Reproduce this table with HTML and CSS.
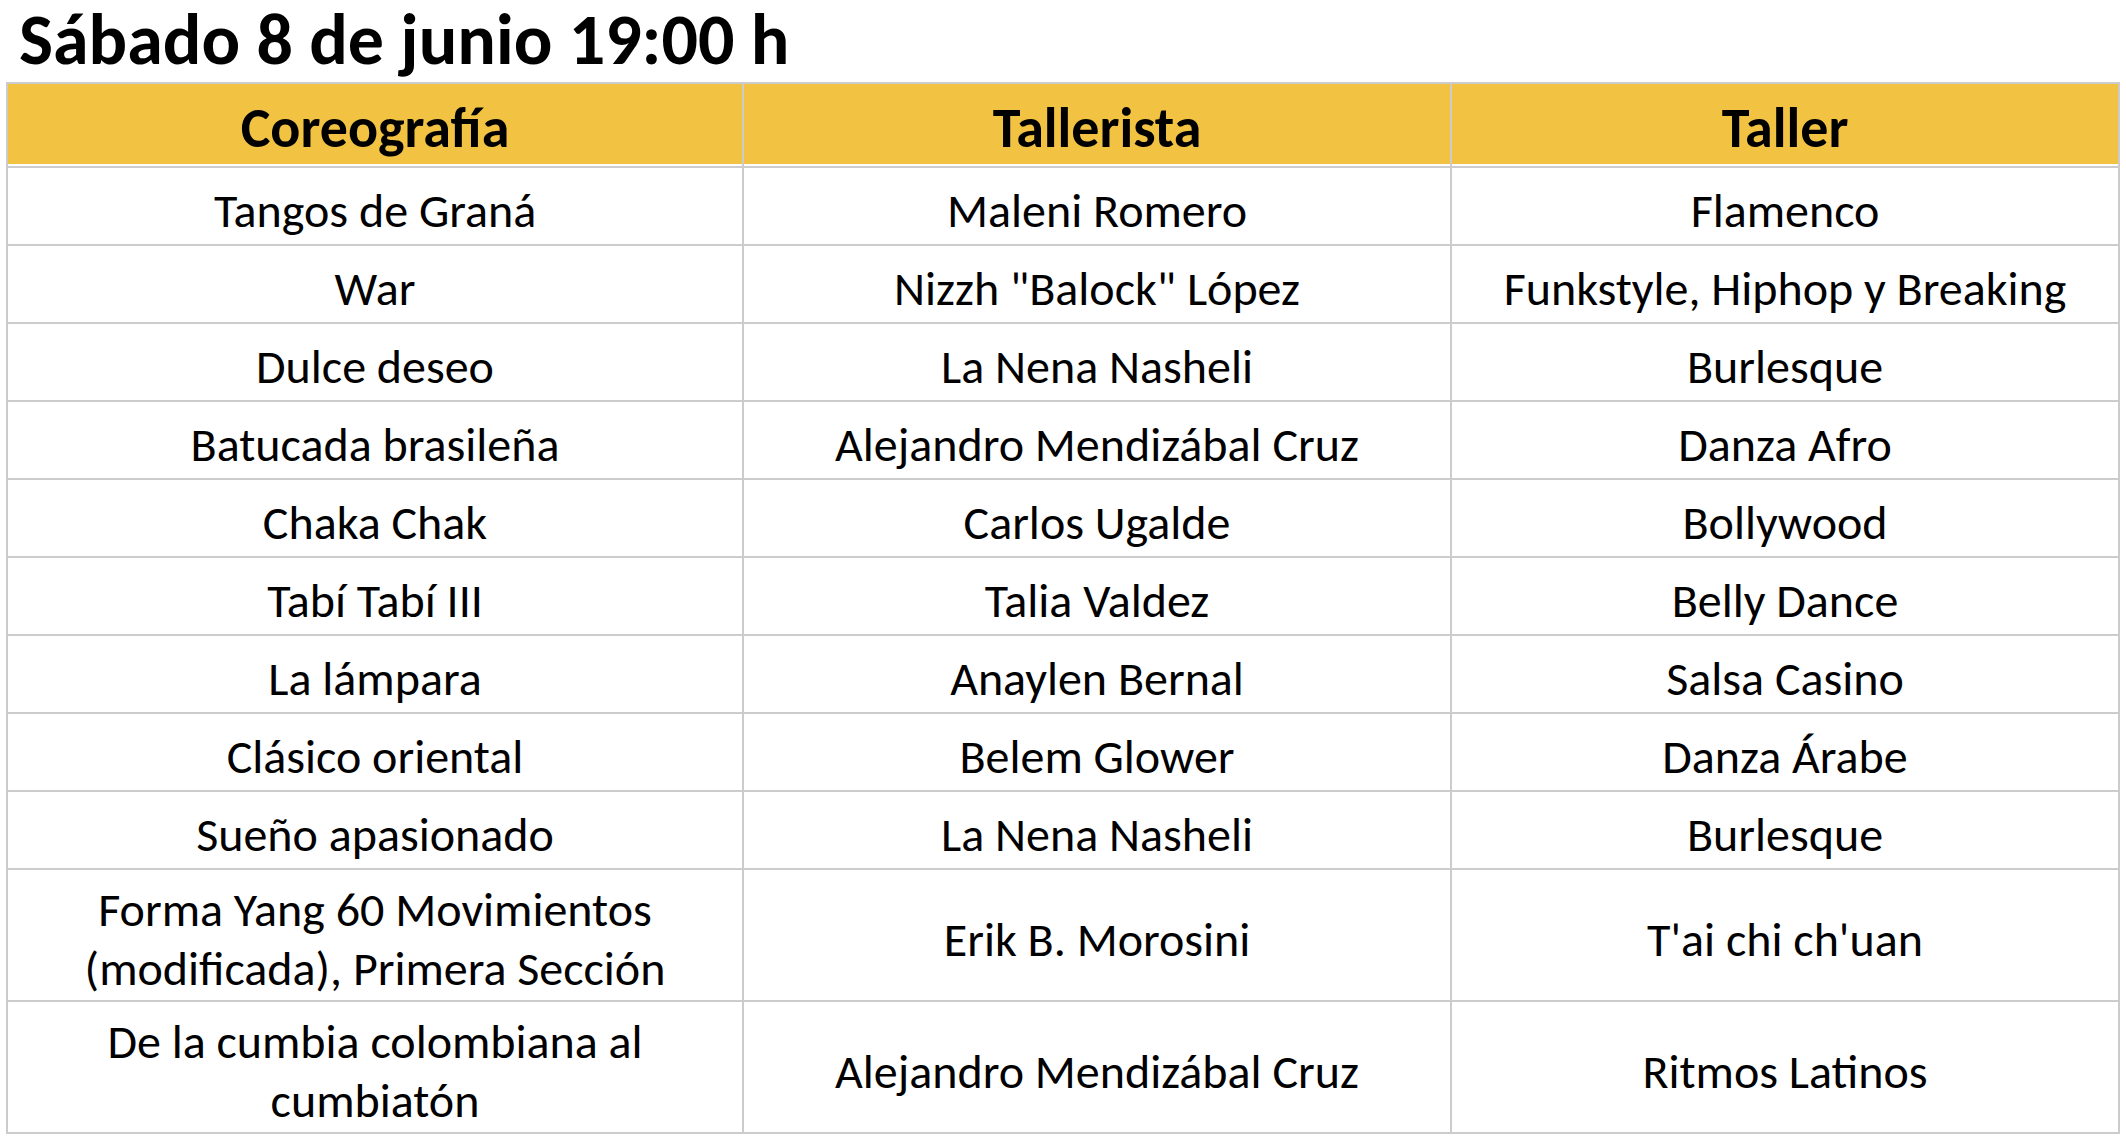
FILE: index.html
```html
<!DOCTYPE html>
<html lang="es">
<head>
<meta charset="utf-8">
<title>Sábado 8 de junio 19:00 h</title>
<link rel="stylesheet" href="styles.css">
</head>
<body>
<div class="page">
  <h1 class="title">Sábado 8 de junio 19:00 h</h1>
  <div class="grid">
    <div class="cell head">Coreografía</div>
    <div class="cell head">Tallerista</div>
    <div class="cell head">Taller</div>

    <div class="cell">Tangos de Graná</div>
    <div class="cell">Maleni Romero</div>
    <div class="cell">Flamenco</div>

    <div class="cell">War</div>
    <div class="cell">Nizzh "Balock" López</div>
    <div class="cell">Funkstyle, Hiphop y Breaking</div>

    <div class="cell">Dulce deseo</div>
    <div class="cell">La Nena Nasheli</div>
    <div class="cell">Burlesque</div>

    <div class="cell">Batucada brasileña</div>
    <div class="cell">Alejandro Mendizábal Cruz</div>
    <div class="cell">Danza Afro</div>

    <div class="cell">Chaka Chak</div>
    <div class="cell">Carlos Ugalde</div>
    <div class="cell">Bollywood</div>

    <div class="cell">Tabí Tabí III</div>
    <div class="cell">Talia Valdez</div>
    <div class="cell">Belly Dance</div>

    <div class="cell">La lámpara</div>
    <div class="cell">Anaylen Bernal</div>
    <div class="cell">Salsa Casino</div>

    <div class="cell">Clásico oriental</div>
    <div class="cell">Belem Glower</div>
    <div class="cell">Danza Árabe</div>

    <div class="cell">Sueño apasionado</div>
    <div class="cell">La Nena Nasheli</div>
    <div class="cell">Burlesque</div>

    <div class="cell">Forma Yang 60 Movimientos<br>(modificada), Primera Sección</div>
    <div class="cell">Erik B. Morosini</div>
    <div class="cell">T'ai chi ch'uan</div>

    <div class="cell">De la cumbia colombiana al<br>cumbiatón</div>
    <div class="cell">Alejandro Mendizábal Cruz</div>
    <div class="cell">Ritmos Latinos</div>
  </div>
</div>
</body>
</html>
```

FILE: styles.css
```css
html, body {
  margin: 0;
  padding: 0;
  background: #ffffff;
}

body {
  font-family: "Carlito", "Calibri", "Lato", "Liberation Sans", sans-serif;
  color: #000000;
}

.page {
  padding: 0 0 0 6px;
}

.title {
  margin: 0 0 4px 13px;
  font-size: 72px;
  font-weight: 700;
  line-height: 78px;
}

.grid {
  display: grid;
  width: 2110px;
  grid-template-columns: 734px 706px 666px;
  grid-template-rows: 82px repeat(9, 76px) 130px 130px;
  gap: 2px;
  padding: 2px;
  background: #cccccc;
}

.cell {
  background: #ffffff;
  display: flex;
  align-items: center;
  justify-content: center;
  text-align: center;
  font-size: 48px;
  line-height: 1.22;
  padding-top: 10px;
  box-sizing: border-box;
}

.head {
  background: #f2c243;
  box-shadow: inset 0 -2px 0 #ffffff;
  font-weight: 700;
  font-size: 56px;
  padding-top: 6px;
  padding-bottom: 0;
}
```
